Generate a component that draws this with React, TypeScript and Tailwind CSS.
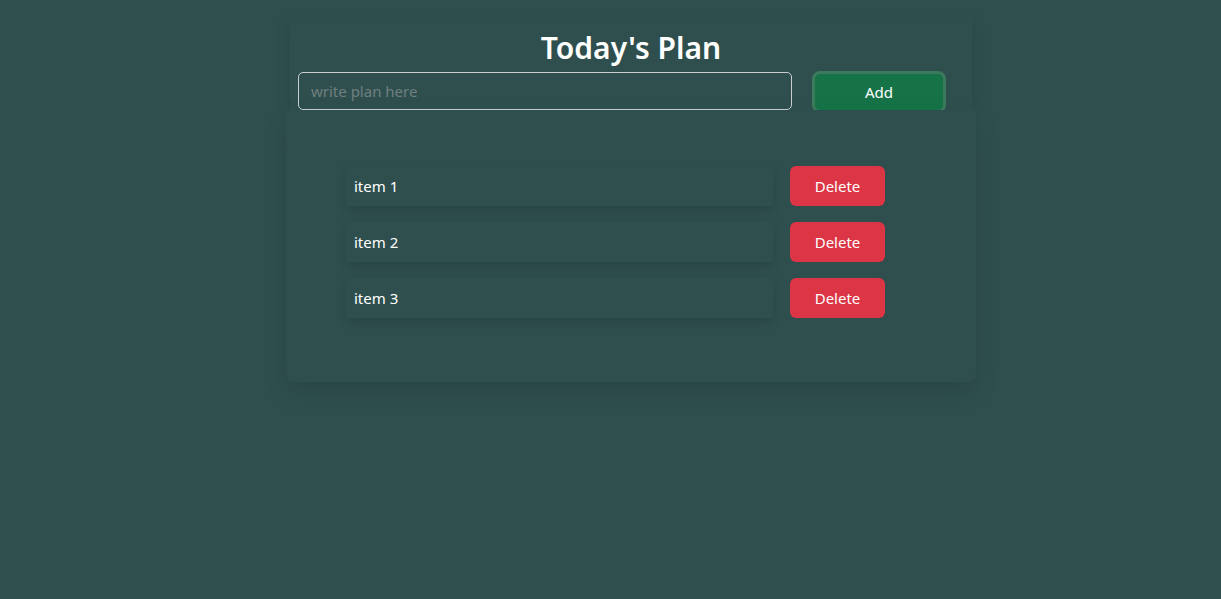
import { useState } from "react"

export default function App() {
  const [items, setItems] = useState(["item 1", "item 2", "item 3"])
  const [text, setText] = useState("")

  const add = () => {
    if (!text.trim()) return
    setItems([...items, text])
    setText("")
  }

  return (
    <div className="min-h-[599px] bg-[#2f4f4f] pt-[17px] font-['Noto_Sans',sans-serif] text-white">
      <div className="ml-[286px] w-[690px]">
        <div className="mx-[4px] h-[93px] bg-[#2f4f4f] px-[8px] pt-[10px] shadow-[0_4px_14px_rgba(0,0,0,0.12)]">
          <h1 className="h-[42px] text-center text-[30px] font-semibold leading-[42px]">Today's Plan</h1>
          <div className="mt-[3px] flex items-start gap-[20px]">
            <input
              value={text}
              onChange={(e) => setText(e.target.value)}
              placeholder="write plan here"
              className="h-[38px] w-[494px] rounded-[5px] border border-[#c8cfcf] bg-transparent px-[12px] text-[15px] text-white outline-none placeholder:text-[#6f7f7f]"
            />
            <button
              onClick={add}
              className="-mt-[1px] h-[42px] w-[134px] rounded-[8px] border-[3px] border-[#3b7a5c] bg-[#157347] text-[15px] text-white"
            >
              Add
            </button>
          </div>
        </div>
        <div className="relative h-[272px] rounded-b-[8px] bg-[#2f4f4f] pt-[56px] shadow-[0_10px_24px_rgba(0,0,0,0.12)]">
          <ul className="flex flex-col gap-[16px] pl-[60px]">
            {items.map((item, i) => (
              <li key={i} className="flex items-center gap-[17px]">
                <div className="flex h-[40px] w-[427px] items-center bg-[#2f4f4f] px-[8px] text-[15px] shadow-[0_5px_10px_rgba(0,0,0,0.12)]">
                  {item}
                </div>
                <button
                  onClick={() => setItems(items.filter((_, j) => j !== i))}
                  className="h-[40px] w-[95px] rounded-[6px] bg-[#dc3545] text-[15px] text-white"
                >
                  Delete
                </button>
              </li>
            ))}
          </ul>
        </div>
      </div>
    </div>
  )
}
